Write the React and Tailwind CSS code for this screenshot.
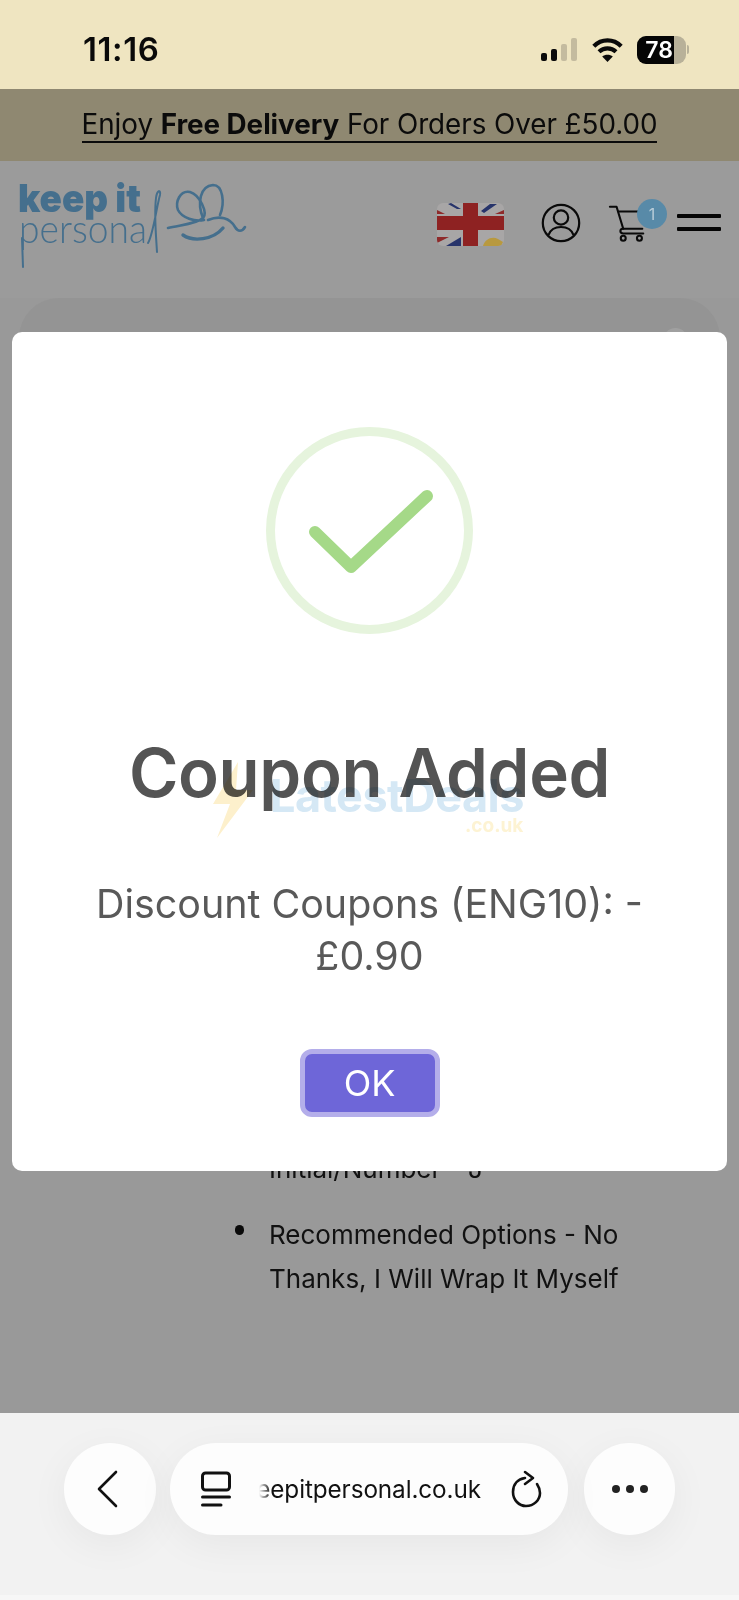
export default function App() {
  const inter = { fontFamily: "Inter, 'Liberation Sans', sans-serif" };
  return (
    <div style={inter} className="relative w-[739px] h-[1600px] overflow-hidden flex flex-col bg-[#999999]">
      {/* Status bar */}
      <div className="h-[89px] shrink-0 bg-[#efe5c1] flex items-center justify-between pl-[83px] pr-[50px] pt-[10px]">
        <span className="text-[33px] font-semibold text-[#0a0a0a] tracking-[0.6px] leading-none">11:16</span>
        <div className="flex items-center">
          <div className="flex items-end gap-[4px] h-[23px]">
            <div className="w-[6px] h-[8px] rounded-[2px] bg-[#0a0a0a]" />
            <div className="w-[6px] h-[12px] rounded-[2px] bg-[#0a0a0a]" />
            <div className="w-[6px] h-[17px] rounded-[2px] bg-[#c4bb9f]" />
            <div className="w-[6px] h-[23px] rounded-[2px] bg-[#c4bb9f]" />
          </div>
          <svg className="ml-[15px]" width="31" height="25" viewBox="0 0 31 25" fill="none" stroke="#0a0a0a" strokeWidth="4.2">
            <path d="M1.8 9.2 C9.5 1.4 21.5 1.4 29.2 9.2" />
            <path d="M7 14.8 C11.8 10.2 19.2 10.2 24 14.8" />
            <path d="M15.5 25 L10.2 19.6 C13 17 18 17 20.8 19.6 Z" fill="#0a0a0a" stroke="none" />
          </svg>
          <div className="ml-[14px] w-[49px] h-[28px] rounded-[9px] overflow-hidden flex bg-[#b8b199]">
            <div className="w-[37px] h-full bg-[#050505] text-white text-[23px] font-semibold leading-[28px] text-right pr-[1px]">78</div>
          </div>
          <div className="ml-[1px] w-[2px] h-[9px] rounded-r-full bg-[#b8b199]" />
        </div>
      </div>

      {/* Promo banner */}
      <div className="h-[72px] shrink-0 bg-[#8f8871] flex items-center justify-center">
        <span className="text-[27.8px] leading-[33px] text-[#0b0b0b] border-b-2 border-[#0b0b0b] tracking-[-0.05px]">
          Enjoy <b className="font-bold">Free Delivery</b> For Orders Over £50.00
        </span>
      </div>

      {/* Site header */}
      <div className="h-[137px] shrink-0 bg-[#9b9b9b] flex items-start">
        <svg className="ml-[16px] mt-[20px] shrink-0" width="236" height="90" viewBox="16 181 236 90" fill="none">
          <text x="18" y="212" textLength="123" lengthAdjust="spacingAndGlyphs" fontFamily="Inter, sans-serif" fontWeight="900" fontSize="39" fill="#456f8d">keep it</text>
          <text x="19" y="243" textLength="128" lengthAdjust="spacingAndGlyphs" fontFamily="Lato, sans-serif" fontWeight="300" fontSize="40" fill="#456f8d">persona</text>
          <g stroke="#456f8d" strokeLinecap="round" fill="none">
            <path strokeWidth="2" d="M22 238 L23 267" />
            <path strokeWidth="2" d="M148 243 C153 235 157 205 160 195 C161 189 157 190 156 198 C154 215 156 235 157 252" />
            <g strokeWidth="2.6">
              <path d="M168 228 C180 225 197 224 203 218 C208 213 200 195 190 192 C180 190 175 202 178 210 C182 218 195 222 204 220" />
              <path d="M203 218 C197 203 200 186 213 185 C223 185 225 203 220 215" />
              <path d="M208 220 C220 215 230 218 235 227 C238 232 242 232 245 227" />
              <path d="M183 235 C193 242 213 240 223 228" strokeWidth="3.4" />
            </g>
          </g>
        </svg>
        <div className="ml-auto mr-[18px] mt-[42px] flex items-center">
          {/* flag */}
          <svg className="rounded-[6px] shrink-0" width="67" height="43" viewBox="0 0 67 43">
            <rect width="67" height="43" fill="#a8a6a6" />
            <path d="M14 0 L24 6 H20 L11 1 Z M44 8 L53 1 H60 L47 10 Z" fill="#27346b" />
            <path d="M0 7 L8 11 H0 Z M58 11 L67 7 V11 Z" fill="#8e2a2a" />
            <path d="M9 43 L24 34 V43 Z" fill="#27346b" />
            <path d="M0 34 H12 L0 40 Z" fill="#8e2a2a" />
            <rect x="26" width="15" height="43" fill="#8e2222" />
            <rect y="13" width="67" height="14" fill="#8e2222" />
            <path d="M46 43 C48 36 55 33 61 36 L66 39 L64 43 Z" fill="#b8993f" />
          </svg>
          {/* profile */}
          <svg className="ml-[37px] -mt-[3px] shrink-0" width="40" height="40" viewBox="0 0 40 40" fill="none" stroke="#0a0a0a" strokeWidth="2.2">
            <circle cx="20" cy="20" r="18.2" />
            <circle cx="20" cy="14.5" r="7.2" />
            <path d="M7.5 32 C10 25 15 24 20 24 C25 24 30 25 32.5 32" />
          </svg>
          {/* cart with badge */}
          <div className="relative ml-[27px] w-[60px] h-[40px] shrink-0">
            <svg className="absolute left-0 top-[-2px]" width="40" height="40" viewBox="0 0 40 42" fill="none" stroke="#0a0a0a" strokeWidth="2.2" strokeLinecap="round" strokeLinejoin="round">
              <path d="M1 4 H8 L15 27 H35" />
              <path d="M10 9 H35" />
              <path d="M15 27 C11 27 11 32 15 32 H36" />
              <circle cx="15" cy="37" r="2.6" />
              <circle cx="32" cy="37" r="2.6" />
            </svg>
            <div className="absolute left-[29px] top-[-6px] w-[30px] h-[30px] rounded-full bg-[#588aa8] text-[#b9cdd9] text-[16px] leading-[30px] text-center">1</div>
          </div>
          {/* menu */}
          <div className="ml-[9px] flex flex-col gap-[9px] w-[44px] shrink-0 -mt-[5px]">
            <div className="h-[4px] bg-[#050505] rounded-[1px]" />
            <div className="h-[4px] bg-[#050505] rounded-[1px]" />
          </div>
        </div>
      </div>

      {/* Page behind the dialog */}
      <div className="flex-1 min-h-0 overflow-hidden">
        <div className="relative mx-[19px] h-[850px] rounded-[40px] bg-[#949494]">
          <div className="absolute right-[32px] top-[30px] w-[25px] h-[25px] rounded-full bg-[#a0a0a0]" />
        </div>
        <ul className="ml-[269px] w-[360px] text-[#111111] text-[26px] leading-[44px] -mt-[1px]">
          <li>Initial/Number - J</li>
          <li className="relative mt-[22px]">
            <span className="absolute left-[-34px] top-[12px] w-[9px] h-[10px] rounded-full bg-[#0a0a0a]" />
            Recommended Options - No Thanks, I Will Wrap It Myself
          </li>
        </ul>
      </div>

      {/* Browser toolbar */}
      <div className="h-[187px] shrink-0 bg-[#f2f2f2] border-b-[5px] border-[#f7f7f7] flex items-start pt-[30px] pl-[64px]">
        <div className="w-[92px] h-[92px] rounded-full bg-[#fdfdfd] shadow-[0_10px_40px_rgba(0,0,0,0.05)] flex items-center justify-center shrink-0 pr-[4px]">
          <svg width="24" height="38" viewBox="0 0 24 38" fill="none" stroke="#111" strokeWidth="2.6" strokeLinecap="round" strokeLinejoin="round">
            <path d="M20 2 L3 19 L20 36" />
          </svg>
        </div>
        <div className="relative ml-[14px] w-[398px] h-[92px] rounded-full bg-[#fdfdfd] shadow-[0_10px_40px_rgba(0,0,0,0.05)] flex items-center shrink-0">
          <svg className="ml-[31px] shrink-0" width="30" height="36" viewBox="0 0 30 36" fill="none" stroke="#111" strokeWidth="3" strokeLinecap="round">
            <rect x="1.5" y="2" width="27" height="17" rx="3" />
            <path d="M1.5 26 H28.5" />
            <path d="M1.5 34 H20" />
          </svg>
          <div className="relative ml-[28px] w-[222px] overflow-hidden flex justify-end">
            <span className="text-[24.3px] leading-[32px] text-[#111111] whitespace-nowrap tracking-[-0.1px]">keepitpersonal.co.uk</span>
            <div className="absolute left-0 top-0 w-[12px] h-full bg-gradient-to-r from-[#fdfdfd] to-transparent" />
          </div>
          <svg className="ml-[30px] shrink-0" width="32" height="38" viewBox="0 0 32 38" fill="none" stroke="#111" strokeWidth="2.6" strokeLinecap="round" strokeLinejoin="round">
            <path d="M14 8 C7 9 2 14 2 22 C2 30 8 36 15 36 C23 36 29 30 29 23 C29 19 28 17 26 14" />
            <path d="M14 2 L22 8 L14 14" />
          </svg>
        </div>
        <div className="ml-[16px] w-[91px] h-[92px] rounded-full bg-[#fdfdfd] shadow-[0_10px_40px_rgba(0,0,0,0.05)] flex items-center justify-center gap-[6px] shrink-0">
          <div className="w-[8px] h-[8px] rounded-full bg-[#222]" />
          <div className="w-[8px] h-[8px] rounded-full bg-[#222]" />
          <div className="w-[8px] h-[8px] rounded-full bg-[#222]" />
        </div>
      </div>

      {/* Dialog */}
      <div className="absolute left-[12px] top-[332px] w-[715px] h-[839px] bg-white rounded-[10px] flex flex-col items-center pt-[95px]">
        <div className="w-[207px] h-[207px] rounded-full border-[9px] border-[#e6f4dd] flex items-center justify-center shrink-0">
          <svg className="mt-[3px] ml-[3px]" width="128" height="88" viewBox="0 0 128 88" fill="none" stroke="#a5d988" strokeWidth="12" strokeLinecap="round" strokeLinejoin="round">
            <path d="M8 44 L44 79 L120 8" />
          </svg>
        </div>
        <h1 className="mt-[99px] text-[67.2px] leading-[80px] font-semibold text-[#545454] tracking-[-0.4px]">Coupon Added</h1>
        <p className="mt-[65px] w-[640px] text-center text-[39.4px] leading-[52px] text-[#595959]">Discount Coupons (ENG10): -<br />£0.90</p>
        <button className="mt-[67px] w-[140px] h-[68px] rounded-[12px] border-[5px] border-[#b4aeea] bg-[#6e66d8] text-white text-[36px] leading-none">OK</button>

        {/* Watermark across the dialog */}
        <div className="absolute left-[200px] top-[430px] w-[320px] h-[80px] mix-blend-multiply pointer-events-none">
          <svg className="absolute left-0 top-0" width="42" height="76" viewBox="0 0 42 76">
            <path d="M26 0 L1 42 L18 42 L5 76 L41 28 L24 28 Z" fill="#fdf0cc" />
          </svg>
          <span className="absolute left-[58px] top-[12px] text-[45px] leading-[44px] font-bold text-[#d5e8f5] tracking-[-0.5px] whitespace-nowrap">LatestDeals</span>
          <span className="absolute left-[253px] top-[53px] text-[19px] leading-[22px] font-bold text-[#fdf3d3] whitespace-nowrap">.co.uk</span>
        </div>
      </div>
    </div>
  );
}
